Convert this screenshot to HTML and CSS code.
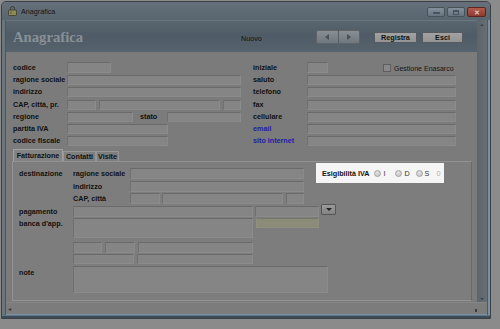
FILE: index.html
```html
<!DOCTYPE html>
<html lang="it">
<head>
<meta charset="utf-8">
<title>Anagrafica</title>
<link rel="stylesheet" href="styles.css">
</head>
<body>
<div class="screen">
  <div class="window">
    <div class="titlebar">
      <svg class="appicon" width="9" height="10" viewBox="0 0 9 10">
        <path d="M2.5 4 V2.5 A2 2 0 0 1 6.5 2.5 V4" fill="none" stroke="#3a3a3a" stroke-width="1"/>
        <rect x="0.5" y="4" width="8" height="5.5" rx="1" fill="#8f8a5a" stroke="#3c3a2a" stroke-width="0.8"/>
        <rect x="2" y="5.5" width="2" height="2.5" fill="#5d7a45"/>
      </svg>
      <span class="wtitle">Anagrafica</span>
      <div class="wctrls">
        <span class="wbtn"><span class="g-min"></span></span>
        <span class="wbtn"><span class="g-max"></span></span>
        <span class="wbtn close"><span class="g-x">✕</span></span>
      </div>
    </div>

    <div class="middle">
      <div class="lframe"></div>
      <div class="client">
        <div class="header">
          <div class="htitle">Anagrafica</div>
          <div class="nuovo">Nuovo</div>
          <div class="nav">
            <span class="navbtn"><span class="tri-l"></span></span>
            <span class="navbtn"><span class="tri-r"></span></span>
          </div>
          <div class="btn reg">Registra</div>
          <div class="btn esci">Esci</div>
        </div>

        <div class="form">
          <div class="top">
            <div class="col">
              <div class="row"><span class="lbl">codice</span><span class="f w44 tall"></span></div>
              <div class="row"><span class="lbl">ragione sociale</span><span class="f w174"></span></div>
              <div class="row"><span class="lbl">indirizzo</span><span class="f w174"></span></div>
              <div class="row"><span class="lbl">CAP, città, pr.</span><span class="f w29"></span><span class="f w121 g3"></span><span class="f w18 g3"></span></div>
              <div class="row"><span class="lbl">regione</span><span class="f w66"></span><span class="lbl stato">stato</span><span class="f w74"></span></div>
              <div class="row"><span class="lbl">partita IVA</span><span class="f w101"></span></div>
              <div class="row"><span class="lbl">codice fiscale</span><span class="f w101"></span></div>
            </div>
            <div class="col">
              <div class="row"><span class="lbl">iniziale</span><span class="f w21 tall"></span><span class="chk"></span><span class="reg-txt">Gestione Enasarco</span></div>
              <div class="row"><span class="lbl">saluto</span><span class="f w149"></span></div>
              <div class="row"><span class="lbl">telefono</span><span class="f w149"></span></div>
              <div class="row"><span class="lbl">fax</span><span class="f w149"></span></div>
              <div class="row"><span class="lbl">cellulare</span><span class="f w149"></span></div>
              <div class="row"><span class="lbl link">email</span><span class="f w149"></span></div>
              <div class="row"><span class="lbl link">sito internet</span><span class="f w149"></span></div>
            </div>
          </div>

          <div class="tabs">
            <span class="tab sel t1">Fatturazione</span>
            <span class="tab t2">Contatti</span>
            <span class="tab t3">Visite</span>
          </div>

          <div class="panel">
            <div class="prow"><span class="lbl">destinazione</span><span class="lbl sub">ragione sociale</span><span class="f w174 h11"></span></div>
            <div class="prow"><span class="lbl"></span><span class="lbl sub">indirizzo</span><span class="f w174 h11"></span></div>
            <div class="prow"><span class="lbl"></span><span class="lbl sub">CAP, città</span><span class="f w30 h11"></span><span class="f w121 h11 g2"></span><span class="f w18 h11 g3"></span></div>
            <div class="prow"><span class="lbl">pagamento</span><span class="f w180 h11"></span><span class="f w64 h11 g2"></span><span class="combo"><span class="tri-d"></span></span></div>
            <div class="prow banca"><span class="lbl">banca d'app.</span><span class="f w180 h20"></span><span class="f w63 green g3"></span></div>
            <div class="prow r6"><span class="lbl"></span><span class="f w29 h11"></span><span class="f w30 h11 g3"></span><span class="f w115 h11 g3"></span></div>
            <div class="prow r7"><span class="lbl"></span><span class="f w61"></span><span class="f w116 g3"></span></div>
            <div class="prow note"><span class="lbl">note</span><span class="f w255 h27"></span></div>

            <div class="spot">
              <span class="spot-lbl">Esigibilità IVA</span>
              <span class="radio r-first"></span><span class="rtxt">I</span>
              <span class="radio r-d"></span><span class="rtxt">D</span>
              <span class="radio r-s"></span><span class="rtxt">S</span>
              <span class="zero">0</span>
            </div>
          </div>
        </div>
      </div>
      <div class="vscroll"><span class="sa up"></span><span class="sa down"></span></div>
      <div class="rframe"></div>
    </div>

    <div class="statusrow">
      <div class="lframe"></div>
      <div class="status"><span class="smark">◂</span><span class="grip"></span></div>
      <div class="rframe"></div>
    </div>
    <div class="bframe"></div>
  </div>
</div>
</body>
</html>
```

FILE: styles.css
```css
* { box-sizing: border-box; }
html, body { margin: 0; padding: 0; }
body {
  background: #8b8b8b;
  font-family: "Liberation Sans", Arial, sans-serif;
  font-size: 7.2px;
  color: #121212;
}
.screen {
  width: 500px;
  height: 329px;
  overflow: hidden;
  background: #8b8b8b;
  padding: 1px 0 0 1px;
}
.window {
  width: 490px;
  height: 318px;
  border: 1px solid #3a4147;
  border-radius: 5px 5px 0 0;
  background: #66717a;
  display: flex;
  flex-direction: column;
  overflow: hidden;
}

/* title bar */
.titlebar {
  height: 18px;
  flex: none;
  display: flex;
  align-items: center;
  padding: 0 4px 0 6px;
  background: linear-gradient(#65707a, #5a666f);
}
.appicon { display: block; }
.wtitle { margin-left: 4px; color: #151515; font-size: 7.2px; }
.wctrls {
  margin-left: auto;
  align-self: flex-start;
  margin-top: 5px;
  display: flex;
  gap: 2px;
}
.wbtn {
  width: 18px;
  height: 10px;
  border: 1px solid #48525b;
  border-radius: 2px;
  background: linear-gradient(#83909b, #68747f);
  display: flex;
  align-items: center;
  justify-content: center;
}
.wbtn.close {
  width: 19px;
  background: linear-gradient(#b25a4c, #8d3a2f);
  border-color: #5a2720;
}
.g-min { width: 7px; height: 2px; background: #4a545c; margin-top: 2px; }
.g-max { width: 6px; height: 5px; border: 1px solid #4a545c; border-top-width: 2px; }
.g-x { color: #d8c9c6; font-size: 7px; line-height: 1; font-weight: bold; }

/* middle */
.middle { height: 282px; flex: none; display: flex; }
.lframe { width: 4px; flex: none; background: #6b757c; border-right: 1px solid #4d565d; }
.rframe { width: 3px; flex: none; background: #7b91a3; border-left: 1px solid #4f5a63; }
.client { width: 471px; flex: none; display: flex; flex-direction: column; }
.vscroll {
  width: 10px;
  flex: none;
  background: linear-gradient(90deg, #5d646a, #676e74);
  display: flex;
  flex-direction: column;
  align-items: center;
  justify-content: space-between;
  padding: 4px 0 2px;
}
.sa { width: 0; height: 0; border-left: 2px solid transparent; border-right: 2px solid transparent; }
.sa.up { border-bottom: 2px solid #3b4146; }
.sa.down { border-top: 2px solid #3b4146; }

/* header */
.header {
  height: 32px;
  flex: none;
  display: flex;
  align-items: center;
  padding-left: 7px;
  background: linear-gradient(#59666f 0%, #4f5c67 45%, #56626c 100%);
  border-top: 1px solid #6a7680;
}
.htitle {
  width: 228px;
  font-family: "Liberation Serif", "Times New Roman", serif;
  font-weight: bold;
  font-size: 14.7px;
  color: #889097;
  margin-top: 2px;
}
.nuovo { width: 75px; margin-top: 3px; color: #111; }
.nav {
  width: 44px;
  height: 14px;
  display: flex;
  border: 1px solid #5d646a;
  border-radius: 2px;
  background: linear-gradient(#878e94, #70777d);
  margin-top: 1px;
}
.navbtn { flex: 1; display: flex; align-items: center; justify-content: center; }
.navbtn + .navbtn { border-left: 1px solid #565d63; }
.tri-l { width: 0; height: 0; border-top: 3px solid transparent; border-bottom: 3px solid transparent; border-right: 4px solid #4a5056; }
.tri-r { width: 0; height: 0; border-top: 3px solid transparent; border-bottom: 3px solid transparent; border-left: 4px solid #4a5056; }
.btn {
  height: 11px;
  border: 1px solid #565b60;
  border-radius: 1px;
  background: linear-gradient(#a2a2a2, #939393);
  font-weight: bold;
  font-size: 7.2px;
  line-height: 9px;
  text-align: center;
  color: #101010;
  margin-top: 1px;
}
.btn.reg { width: 43px; margin-left: 14px; }
.btn.esci { width: 41px; margin-left: 5px; }

/* form */
.form {
  flex: 1;
  background: #7b7b7b;
  display: flex;
  flex-direction: column;
}
.top {
  display: grid;
  grid-template-columns: 228px 203px;
  column-gap: 12px;
  padding: 11px 0 0 7px;
}
.col { display: flex; flex-direction: column; gap: 2.2px; }
.row { height: 10px; display: flex; align-items: center; }
.lbl {
  width: 54px;
  flex: none;
  font-weight: bold;
  font-size: 7.2px;
  line-height: 10px;
  white-space: nowrap;
  color: #111;
}
.lbl.link { color: #1b1fa3; }
.lbl.stato { width: 27px; margin-left: 7px; }
.f {
  display: block;
  flex: none;
  height: 10px;
  background: #858585;
  border: 1px solid #8b8b8b;
  border-top-color: #6a6a6a;
  border-left-color: #707070;
}
.tall { height: 11px; margin-top: -1px; }
.h11 { height: 11px; }
.h20 { height: 20px; }
.h27 { height: 27px; }
.g2 { margin-left: 2px; }
.g3 { margin-left: 3px; }
.w18 { width: 18px; } .w21 { width: 21px; } .w29 { width: 29px; } .w30 { width: 30px; }
.w44 { width: 44px; } .w61 { width: 61px; } .w63 { width: 63px; } .w64 { width: 64px; }
.w66 { width: 66px; } .w74 { width: 74px; } .w101 { width: 101px; } .w115 { width: 115px; }
.w116 { width: 116px; } .w121 { width: 121px; } .w149 { width: 149px; } .w174 { width: 174px; }
.w180 { width: 180px; } .w255 { width: 255px; }
.chk {
  width: 8px;
  height: 8px;
  margin-left: 55px;
  border: 1px solid #5e5e5e;
  background: #888;
}
.reg-txt { margin-left: 3px; font-size: 7px; color: #141414; }

/* tabs */
.tabs {
  display: flex;
  align-items: flex-end;
  height: 12px;
  margin: 3px 0 0 7px;
}
.tab {
  height: 10px;
  border: 1px solid #969696;
  border-bottom: none;
  background: #7e7e7e;
  font-weight: bold;
  font-size: 7.2px;
  line-height: 9px;
  text-align: center;
  white-space: nowrap;
  color: #111;
}
.tab.sel { height: 12px; background: #838383; border-color: #a0a0a0; line-height: 11px; }
.t1 { width: 50px; } .t2 { width: 33px; } .t3 { width: 23px; }

.panel {
  position: relative;
  margin-left: 6px;
  width: 460px;
  height: 140px;
  border: 1px solid #929292;
  border-right-color: #6a6a6a;
  border-bottom-color: #939393;
  background: #7d7d7d;
  padding: 6px 0 0 6px;
  display: flex;
  flex-direction: column;
}
.prow { display: flex; align-items: flex-start; height: 11px; margin-bottom: 1.6px; }
.prow .lbl { line-height: 11px; }
.lbl.sub { width: 57px; }
.combo {
  width: 15px;
  height: 11px;
  margin: -2px 0 0 2px;
  border: 1px solid #555;
  border-radius: 1px;
  background: linear-gradient(#9a9a9a, #838383);
  display: flex;
  align-items: center;
  justify-content: center;
}
.tri-d { width: 0; height: 0; border-left: 3px solid transparent; border-right: 3px solid transparent; border-top: 3px solid #222; }
.prow.banca { height: 20px; margin-top: -0.4px; margin-bottom: 4px; }
.green { height: 10px; background: #8a8c78; border-color: #8e8f80; border-top-color: #77786a; }
.prow.r6 { margin-bottom: 1px; }
.prow.r7 { height: 10px; margin-bottom: 2px; }
.prow.note { height: 27px; }
.prow.note .lbl { line-height: 12px; padding-top: 1px; }

/* highlighted group */
.spot {
  position: absolute;
  left: 303px;
  top: 1px;
  width: 128px;
  height: 20px;
  background: #f5f5f5;
  display: flex;
  align-items: center;
  padding-left: 6px;
}
.spot-lbl { font-weight: bold; font-size: 7.2px; color: #111; white-space: nowrap; }
.radio {
  width: 7px;
  height: 7px;
  border-radius: 50%;
  border: 1px solid #a4a4a4;
  background: radial-gradient(circle at 40% 35%, #e6e6e6, #bcbcbc);
  flex: none;
}
.r-first { margin-left: 5px; }
.r-d { margin-left: 10px; }
.r-s { margin-left: 6px; }
.rtxt { margin-left: 2px; font-size: 7.2px; color: #333; }
.zero { margin-left: 7px; font-size: 7.2px; color: #b0b0b0; }

/* status */
.statusrow { height: 13px; flex: none; display: flex; }
.status {
  width: 481px;
  flex: none;
  background: #7c7c7c;
  border-top: 1px solid #858585;
  border-bottom: 1px solid #7c93a6;
  display: flex;
  align-items: center;
  padding: 0 10px 0 2px;
}
.smark { font-size: 6px; color: #3b3b3b; }
.grip { margin-left: auto; width: 2px; height: 3px; background: #3f3f3f; margin-top: 4px; }
.bframe { flex: 1; background: #3f4c57; border-top: 1px solid #5e7687; }
```
